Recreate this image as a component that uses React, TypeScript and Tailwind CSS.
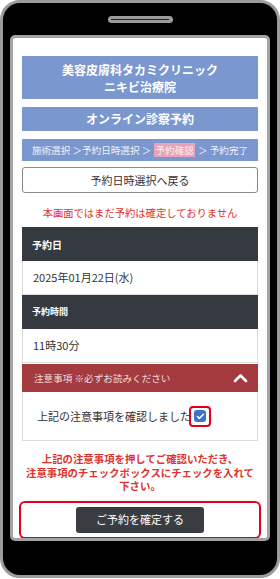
import { Check } from 'lucide-react';

const font = "font-['Noto_Sans_CJK_JP','Noto_Sans',sans-serif]";

function InfoBlock({ label, value, labelSize }: { label: string; value: string; labelSize: string }) {
  return (
    <div>
      <div className={`flex h-[34px] items-center bg-[#343a40] pl-[10px] font-bold text-white ${labelSize}`}>{label}</div>
      <div className="flex h-[34px] items-center border-x border-b border-[#dcdcdc] bg-white pl-[10px] text-[11px] text-[#333]">
        {value}
      </div>
    </div>
  );
}

export default function App() {
  return (
    <div className={`min-h-screen bg-white ${font}`}>
      {/* phone frame */}
      <div className="flex h-[578px] w-[280px] flex-col items-center rounded-[20px] border-[3px] border-[#9b9b9b] bg-black">
        {/* speaker */}
        <div className="mt-[13px] flex h-[7px] w-[65px] items-center justify-center rounded-full bg-[#9b9b9b]">
          <div className="h-px w-[58px] bg-[#222]" />
        </div>

        {/* screen */}
        <div className="mt-[12px] h-[506px] w-[260px] overflow-hidden rounded-[5px] border-[3px] border-[#a3a3a3] bg-white">
          <div className="flex flex-col px-[9px] pt-[18px]">
            <div className="flex h-[43px] flex-col items-center justify-center bg-[#7b97cf] text-[12px] font-bold leading-[17px] text-white">
              <span>美容皮膚科タカミクリニック</span>
              <span>ニキビ治療院</span>
            </div>

            <div className="mt-[8px] flex h-[24px] items-center justify-center bg-[#7b97cf] text-[12px] font-bold text-white">
              オンライン診察予約
            </div>

            <div className="mt-[8px] flex h-[22px] items-center justify-center whitespace-pre bg-[#7b97cf] text-[9.6px] text-[#eef1f8]">
              <span>施術選択 ＞予約日時選択 ＞ </span>
              <span className="mx-[1px] bg-[#e7a3b7] px-[1px] text-[#fbeef2]">予約確認</span>
              <span> ＞ 予約完了</span>
            </div>

            <button className="mt-[6px] flex h-[26px] items-center justify-center rounded-[3px] border border-[#8a8a8a] bg-white text-[11px] text-[#333]">
              予約日時選択へ戻る
            </button>

            <p className="mt-[13px] text-center text-[10.3px] leading-[14px] text-[#e0322c]">
              本画面ではまだ予約は確定しておりません
            </p>

            <div className="mt-[7px]">
              <InfoBlock label="予約日" value="2025年01月22日(水)" labelSize="text-[10px]" />
              <InfoBlock label="予約時間" value="11時30分" labelSize="text-[9px]" />
            </div>

            <div className="mt-px flex h-[28px] items-center justify-between bg-[#a33b3f] pl-[12px] pr-[10px] text-[9.6px] text-[#f3dede]">
              <span>注意事項 ※必ずお読みください</span>
              <svg width="15" height="10" viewBox="0 0 15 10" fill="none">
                <polyline points="2,8 7.5,2.5 13,8" stroke="white" strokeWidth="2.6" strokeLinecap="round" strokeLinejoin="round" />
              </svg>
            </div>

            <div className="flex h-[49px] items-center border-x border-b border-[#dcdcdc] pl-[14px] text-[11px] text-[#333]">
              <span>上記の注意事項を確認しました</span>
              <span className="-ml-[2px] flex h-[21px] w-[22px] items-center justify-center rounded-[4px] border-2 border-[#e0001b]">
                <span className="flex h-[12px] w-[12px] items-center justify-center rounded-[3px] bg-[#3b74c8]">
                  <Check size={9} strokeWidth={4} className="text-white" />
                </span>
              </span>
            </div>

            <p className="mt-[11px] text-center text-[10.4px] font-bold leading-[13.5px] text-[#e0322c]">
              上記の注意事項を押してご確認いただき、
              <br />
              注意事項のチェックボックスにチェックを入れて
              <br />
              下さい。
            </p>

            <div className="-mx-[3px] mt-[8px] flex justify-center rounded-[6px] border-2 border-[#e0001b] py-[4px]">
              <button className="flex h-[26px] w-[128px] items-center justify-center rounded-[3px] bg-[#393c41] text-[11px] text-white">
                ご予約を確定する
              </button>
            </div>
          </div>
        </div>
      </div>
    </div>
  );
}
